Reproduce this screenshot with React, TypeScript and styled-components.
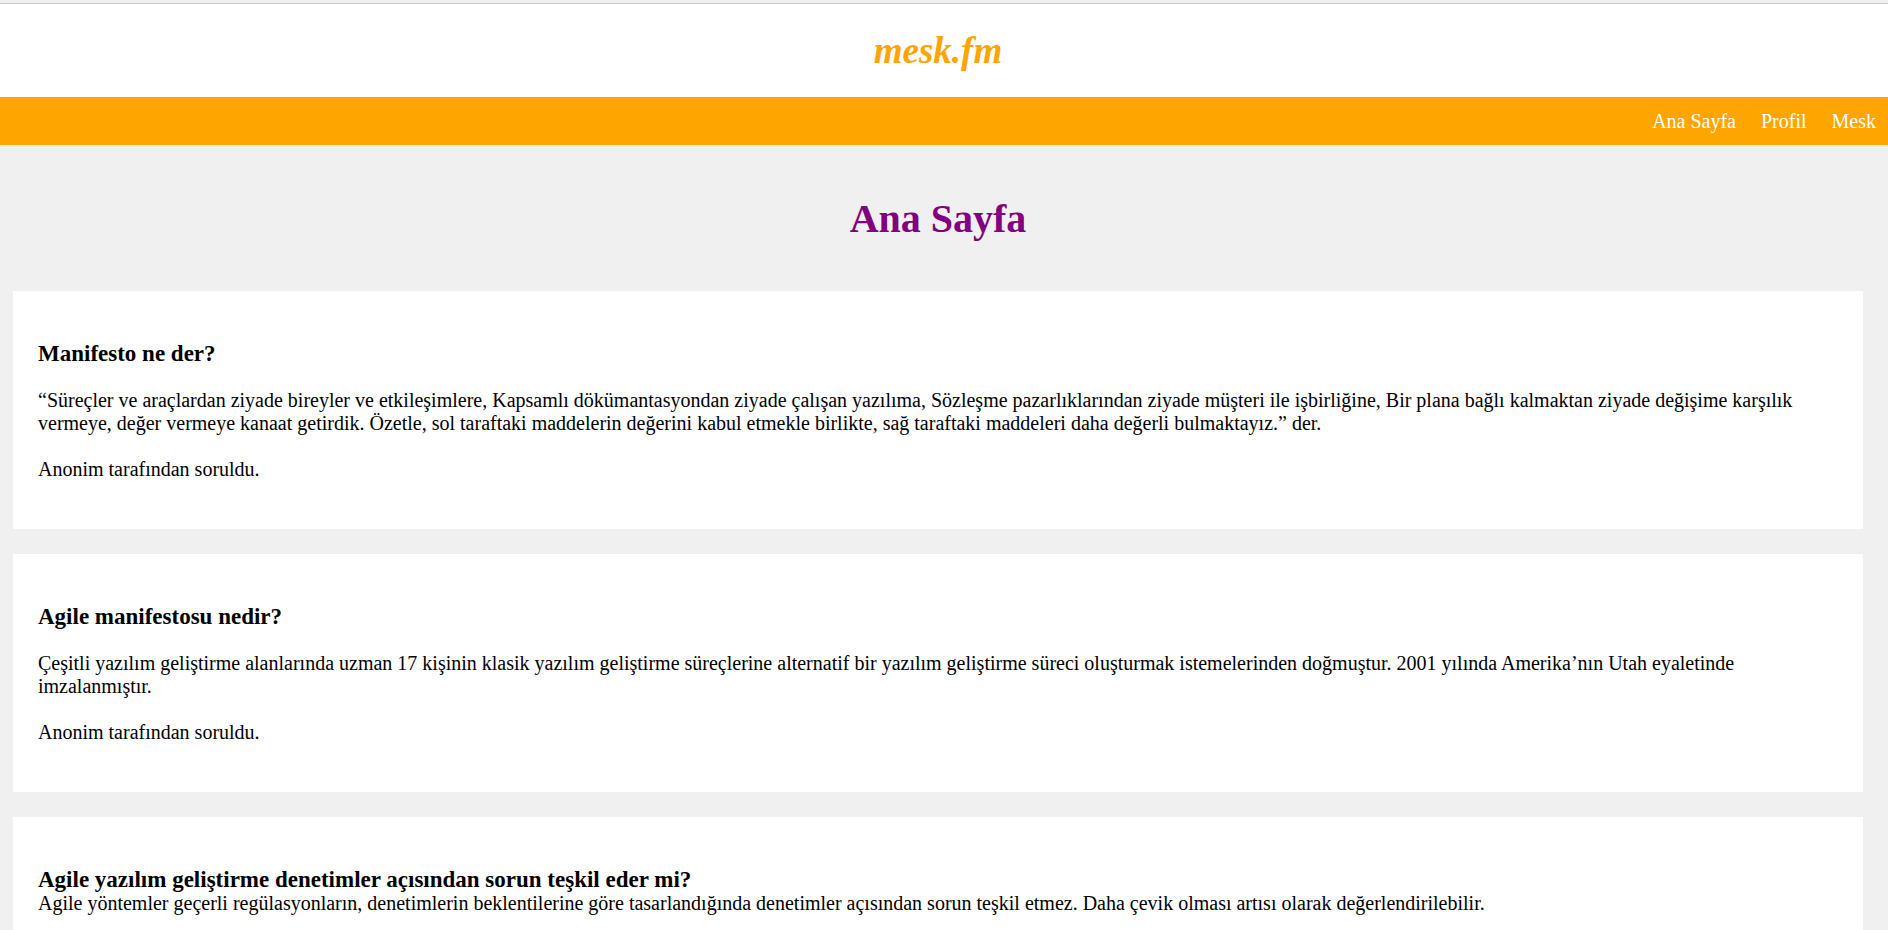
import React from 'react';
import styled, { createGlobalStyle } from 'styled-components';

const GlobalStyle = createGlobalStyle`
  * { box-sizing: border-box; }
  body {
    margin: 0;
    background: #f0f0f0;
    color: #000;
    font-family: "Liberation Serif", "Times New Roman", serif;
    font-size: 20px;
    line-height: 23px;
  }
`;

const Page = styled.div`
  padding-top: 3px;
`;

const Header = styled.header`
  display: flex;
  justify-content: center;
  padding: 24px 25px 24px 13px;
  border-top: 1px solid #c8c8c8;
  background: #fff;
`;

const Logo = styled.a`
  color: orange;
  font-size: 37px;
  font-style: italic;
  font-weight: bold;
  line-height: 45px;
  text-decoration: none;
`;

const Nav = styled.nav`
  display: flex;
  justify-content: flex-end;
  gap: 25px;
  padding: 0 12px;
  background: orange;
`;

const NavLink = styled.a`
  padding: 12px 0;
  color: #fff;
  line-height: 24px;
  text-decoration: none;
`;

const Main = styled.main`
  display: flex;
  flex-direction: column;
  gap: 25px;
  padding: 51px 25px 25px 13px;
`;

const PageTitle = styled.h1`
  margin: 0;
  padding-bottom: 24px;
  color: purple;
  font-size: 40px;
  line-height: 46px;
  text-align: center;
`;

const Card = styled.article`
  padding: 50px 25px 48px;
  background: #fff;
`;

const Question = styled.h3<{ $tight?: boolean }>`
  margin: 0 0 ${({ $tight }) => ($tight ? 0 : 23)}px;
  font-size: 23px;
  line-height: 25px;
`;

const Text = styled.p`
  margin: 0 0 23px;
  &:last-child { margin: 0; }
`;

const links = ['Ana Sayfa', 'Profil', 'Mesk'];

const posts = [
  {
    question: 'Manifesto ne der?',
    answer:
      '“Süreçler ve araçlardan ziyade bireyler ve etkileşimlere, Kapsamlı dökümantasyondan ziyade çalışan yazılıma, Sözleşme pazarlıklarından ziyade müşteri ile işbirliğine, Bir plana bağlı kalmaktan ziyade değişime karşılık vermeye, değer vermeye kanaat getirdik. Özetle, sol taraftaki maddelerin değerini kabul etmekle birlikte, sağ taraftaki maddeleri daha değerli bulmaktayız.” der.',
    author: 'Anonim tarafından soruldu.',
  },
  {
    question: 'Agile manifestosu nedir?',
    answer:
      'Çeşitli yazılım geliştirme alanlarında uzman 17 kişinin klasik yazılım geliştirme süreçlerine alternatif bir yazılım geliştirme süreci oluşturmak istemelerinden doğmuştur. 2001 yılında Amerika’nın Utah eyaletinde imzalanmıştır.',
    author: 'Anonim tarafından soruldu.',
  },
  {
    question: 'Agile yazılım geliştirme denetimler açısından sorun teşkil eder mi?',
    answer:
      'Agile yöntemler geçerli regülasyonların, denetimlerin beklentilerine göre tasarlandığında denetimler açısından sorun teşkil etmez. Daha çevik olması artısı olarak değerlendirilebilir.',
    tight: true,
  },
];

export default function App() {
  return (
    <Page>
      <GlobalStyle />
      <Header>
        <Logo href="#">mesk.fm</Logo>
      </Header>
      <Nav>
        {links.map((label) => (
          <NavLink key={label} href="#">{label}</NavLink>
        ))}
      </Nav>
      <Main>
        <PageTitle>Ana Sayfa</PageTitle>
        {posts.map(({ question, answer, author, tight }) => (
          <Card key={question}>
            <Question $tight={tight}>{question}</Question>
            <Text>{answer}</Text>
            {author && <Text>{author}</Text>}
          </Card>
        ))}
      </Main>
    </Page>
  );
}
